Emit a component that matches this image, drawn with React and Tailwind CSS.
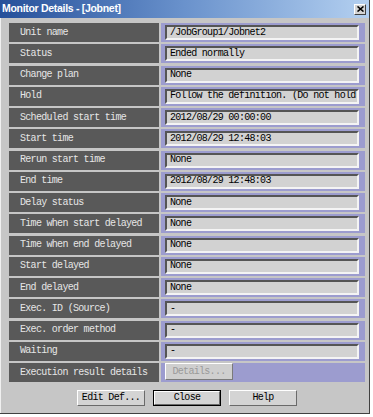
import React from "react";

const rows = [
  ["Unit name", "/JobGroup1/Jobnet2"],
  ["Status", "Ended normally"],
  ["Change plan", "None"],
  ["Hold", "Follow the definition. (Do not hold"],
  ["Scheduled start time", "2012/08/29 00:00:00"],
  ["Start time", "2012/08/29 12:48:03"],
  ["Rerun start time", "None"],
  ["End time", "2012/08/29 12:48:03"],
  ["Delay status", "None"],
  ["Time when start delayed", "None"],
  ["Time when end delayed", "None"],
  ["Start delayed", "None"],
  ["End delayed", "None"],
  ["Exec. ID (Source)", "-"],
  ["Exec. order method", "-"],
  ["Waiting", "-"],
];

const mono = "font-['Liberation_Mono',monospace] text-[10px] tracking-[-0.7px] leading-none";

function Row({ label, children }) {
  return (
    <div className="flex h-[19px] gap-[2px]">
      <div className={`w-[150px] bg-[#595959] text-[#e6e6e6] pl-[11px] flex items-center ${mono}`}>
        {label}
      </div>
      <div className="flex-1 bg-[#9c9ccf] pl-[4px] pr-[6px] py-[2px] flex">{children}</div>
    </div>
  );
}

function Btn({ children, def }) {
  return (
    <div
      className={`w-[68px] h-[16px] bg-[#d4d4d4] flex items-center justify-center text-black ${mono} ${
        def ? "border border-black" : ""
      }`}
    >
      <div className="w-full h-full border border-t-white border-l-white border-b-[#6a6a6a] border-r-[#6a6a6a] flex items-center justify-center">
        {children}
      </div>
    </div>
  );
}

export default function App() {
  return (
    <div className="w-[373px] h-[417px] bg-white">
      <div className="w-[370px] h-[414px] bg-[#c6c6c6] border-r border-b border-r-[#404040] border-b-[#404040] flex flex-col">
        <div className="h-[18px] bg-gradient-to-r from-[#26509a] via-[#6a92cc] to-[#b4d0f0] flex items-center justify-between pl-[2px] pr-[3px]">
          <span className="text-white font-bold font-['Liberation_Sans',sans-serif] text-[10.5px] tracking-[-0.3px]">
            Monitor Details - [Jobnet]
          </span>
          <div className="w-[12px] h-[11px] bg-[#d4d4d4] border border-t-white border-l-white border-b-[#404040] border-r-[#404040] flex items-center justify-center">
            <svg width="7" height="6" viewBox="0 0 7 6">
              <path d="M0.5 0.5 L6.5 5.5 M6.5 0.5 L0.5 5.5" stroke="black" strokeWidth="1.6" />
            </svg>
          </div>
        </div>
        <div className="flex-1 border-l border-l-[#f0f0f0] pl-[8px] pr-[4px] pt-[5px] flex flex-col gap-[2.25px]">
          {rows.map(([l, v]) => (
            <Row key={l} label={l}>
              <div
                className={`flex-1 bg-[#d2d2d2] border-2 border-t-[#555] border-l-[#555] border-b-[#f4f4f4] border-r-[#f4f4f4] flex items-center pl-[3px] text-black overflow-hidden whitespace-nowrap ${mono}`}
              >
                {v}
              </div>
            </Row>
          ))}
          <Row label="Execution result details">
            <div
              className={`w-[68px] h-[17px] -mt-[2px] -ml-[0px] bg-[#cfcfcf] border border-t-white border-l-white border-b-[#7a7a7a] border-r-[#7a7a7a] flex items-center justify-center text-[#9a9a9a] ${mono}`}
            >
              Details...
            </div>
          </Row>
          <div className="flex justify-center gap-[8px] mt-[6px]">
            <Btn>Edit Def...</Btn>
            <Btn def>Close</Btn>
            <Btn>Help</Btn>
          </div>
        </div>
      </div>
    </div>
  );
}
